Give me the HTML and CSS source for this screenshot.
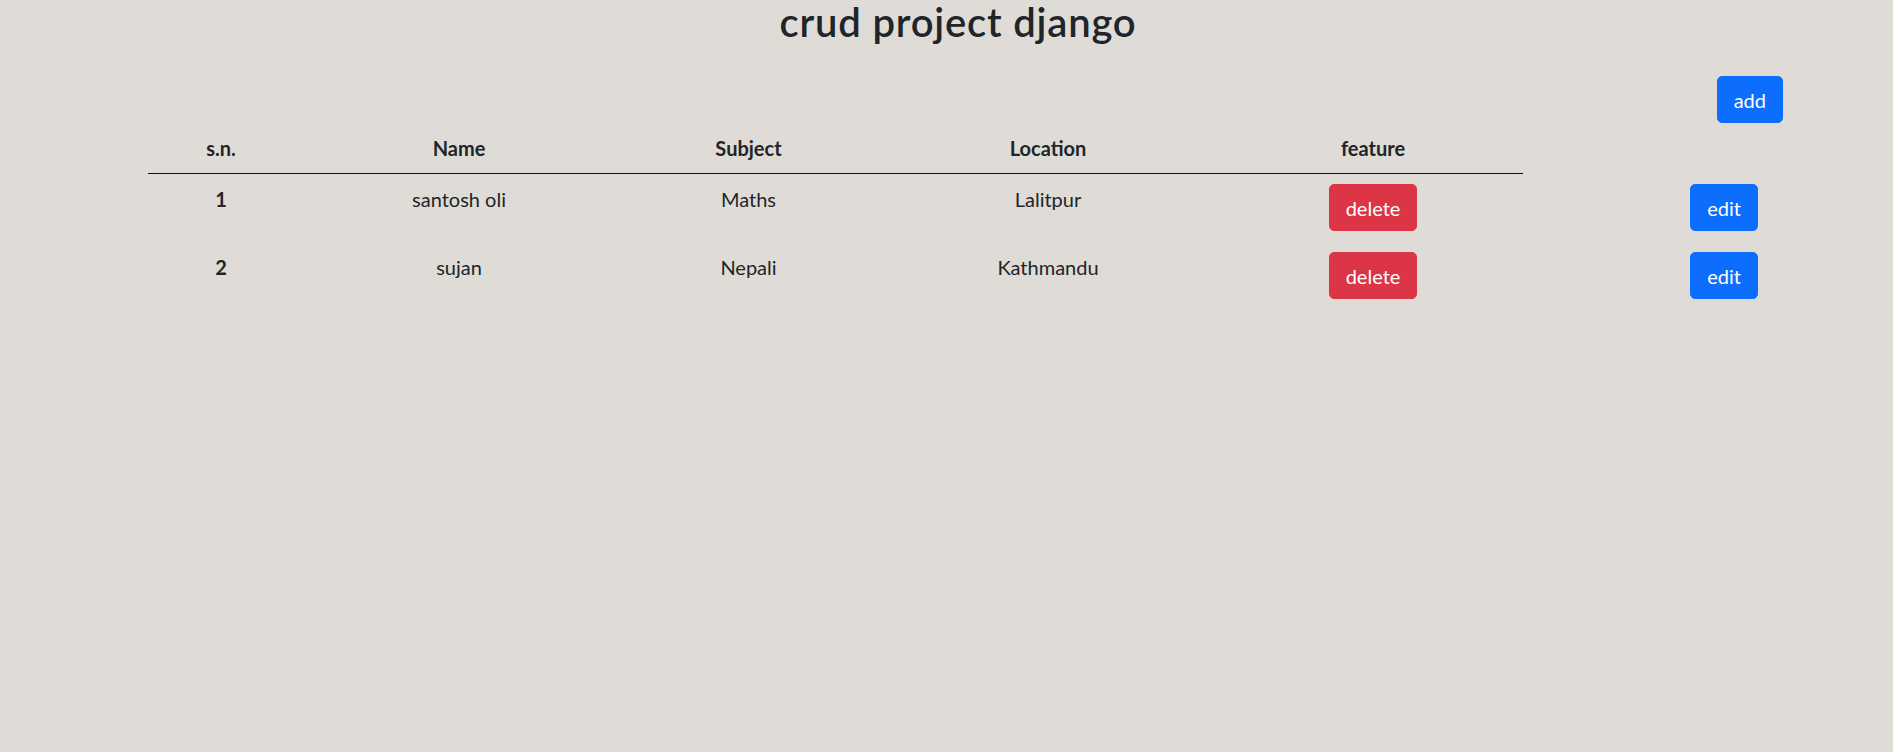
FILE: index.html
```html
<!DOCTYPE html>
<html lang="en">
<head>
<meta charset="utf-8">
<title>crud project django</title>
<link rel="stylesheet" href="styles.css">
</head>
<body>
<div class="container">
  <h2 class="title">crud project django</h2>
  <div class="toolbar">
    <a class="btn btn-primary" href="#">add</a>
  </div>
  <table class="table">
    <colgroup>
      <col class="w-sn">
      <col class="w-name">
      <col class="w-subject">
      <col class="w-location">
      <col class="w-feature">
      <col class="w-edit">
    </colgroup>
    <thead>
      <tr>
        <th>s.n.</th>
        <th>Name</th>
        <th>Subject</th>
        <th>Location</th>
        <th>feature</th>
      </tr>
    </thead>
    <tbody>
      <tr>
        <th class="row-head">1</th>
        <td>santosh oli</td>
        <td>Maths</td>
        <td>Lalitpur</td>
        <td><button class="btn btn-danger" type="button">delete</button></td>
        <td class="cell-end"><button class="btn btn-primary" type="button">edit</button></td>
      </tr>
      <tr>
        <th class="row-head">2</th>
        <td>sujan</td>
        <td>Nepali</td>
        <td>Kathmandu</td>
        <td><button class="btn btn-danger" type="button">delete</button></td>
        <td class="cell-end"><button class="btn btn-primary" type="button">edit</button></td>
      </tr>
    </tbody>
  </table>
</div>
</body>
</html>
```
FILE: styles.css
```css
html, body {
  margin: 0;
  padding: 0;
}

body {
  background: #dfdcd7;
  color: #212529;
  font-family: Lato, "Open Sans", "Noto Sans", sans-serif;
  font-size: 20px;
  line-height: 30px;
}

.container {
  width: 1650px;
  margin-left: 133px;
}

.title {
  margin: 0;
  font-size: 40px;
  font-weight: 600;
  line-height: 44px;
  letter-spacing: 0.8px;
  text-align: center;
  color: #212529;
}

.toolbar {
  margin-top: 32px;
  display: flex;
  justify-content: flex-end;
}

.btn {
  display: inline-block;
  font-family: inherit;
  font-size: 20px;
  line-height: 30px;
  padding: 7.5px 16px;
  border: 1px solid transparent;
  border-radius: 5px;
  color: #fff;
  text-decoration: none;
  cursor: pointer;
  vertical-align: top;
}

.btn-primary {
  background: #0d6efd;
  border-color: #0d6efd;
}

.btn-danger {
  background: #dc3545;
  border-color: #dc3545;
}

.table {
  width: 1620px;
  margin: 0 15px;
  table-layout: fixed;
  border-collapse: separate;
  border-spacing: 0;
}

.w-sn { width: 146px; }
.w-name { width: 330px; }
.w-subject { width: 249px; }
.w-location { width: 350px; }
.w-feature { width: 300px; }
.w-edit { width: 245px; }

.table th,
.table td {
  padding: 10px;
  text-align: center;
  vertical-align: top;
}

.table thead th {
  font-weight: 700;
  border-bottom: 1px solid #111;
}

.table tbody th,
.table tbody td {
  border-bottom: 1px solid #dee2e6;
}

.table .row-head {
  font-weight: 700;
}

.table td {
  font-weight: 400;
}

.table .cell-end {
  text-align: right;
}
```
